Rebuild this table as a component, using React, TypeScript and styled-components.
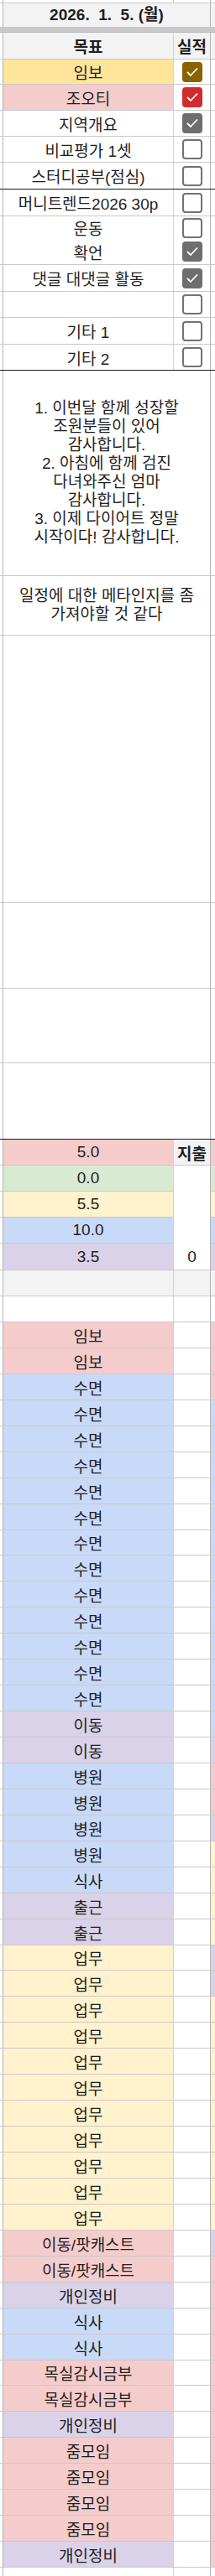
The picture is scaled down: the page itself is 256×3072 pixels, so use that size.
import React from "react";
import styled, { createGlobalStyle } from "styled-components";

const GlobalStyle = createGlobalStyle`
  body {
    margin: 0;
    background: #fff;
  }
  * {
    box-sizing: border-box;
  }
`;

const COLS = "4px 203px 44px 5px";

const C = {
	pink: "#f4cccc",
	blue: "#c9daf8",
	purple: "#d9d2e9",
	yellow: "#fff2cc",
	green: "#d9ead3",
	gold: "#ffe599",
	gray: "#f3f3f3",
	white: "#ffffff",
};

const Sheet = styled.div`
	width: 256px;
	font-family: "Liberation Sans", "Noto Sans CJK KR", sans-serif;
	font-size: 19px;
	color: #1f1f1f;
	overflow: hidden;
`;

const Row = styled.div<{ $h: number; $rule?: "black" | "none" }>`
	display: grid;
	grid-template-columns: ${COLS};
	height: ${(p) => p.$h}px;
	border-bottom: ${(p) =>
		p.$rule === "none"
			? "0"
			: `1px solid ${p.$rule === "black" ? "#1a1a1a" : "#c9c9c9"}`};
`;

const Band = styled.div`
	height: 6px;
	background: #cacaca;
	border-bottom: 1px solid #b9b9b9;
`;

const Edge = styled.div`
	background: #fff;
	border-right: 1px solid #b4b4b4;
`;

const Main = styled.div<{ $bg?: string; $bold?: boolean }>`
	background: ${(p) => p.$bg ?? C.white};
	border-right: 1px solid #d2d2d2;
	display: flex;
	align-items: center;
	justify-content: center;
	font-weight: ${(p) => (p.$bold ? 700 : 400)};
	white-space: nowrap;
`;

const Side = styled.div<{ $bg?: string; $bold?: boolean }>`
	background: ${(p) => p.$bg ?? C.white};
	border-right: 1px solid #b4b4b4;
	display: flex;
	align-items: center;
	justify-content: center;
	font-weight: ${(p) => (p.$bold ? 700 : 400)};
	white-space: nowrap;
`;

const Wide = styled.div<{ $bg?: string; $bold?: boolean }>`
	grid-column: span 2;
	background: ${(p) => p.$bg ?? C.white};
	border-right: 1px solid #b4b4b4;
	display: flex;
	align-items: center;
	justify-content: center;
	text-align: center;
	line-height: 22px;
	font-weight: ${(p) => (p.$bold ? 700 : 400)};
	white-space: pre;
`;

const Tail = styled.div<{ $bg?: string }>`
	background: ${(p) => p.$bg ?? C.white};
`;

const SpendGrid = styled.div`
	display: grid;
	grid-template-columns: ${COLS};
	grid-template-rows: repeat(5, 31px);
	border-bottom: 1px solid #c9c9c9;

	& > * {
		border-bottom: 1px solid #c9c9c9;
	}
	& > *:nth-last-child(-n + 3) {
		border-bottom: 0;
	}
`;

const MergedTotal = styled.div`
	grid-row: span 4;
	background: #fff;
	border-right: 1px solid #b4b4b4;
	border-bottom: 0 !important;
	display: flex;
	align-items: flex-end;
	justify-content: center;
	padding-bottom: 4px;
`;

const Box = styled.span<{ $fill?: string }>`
	width: 24px;
	height: 24px;
	border-radius: 4px;
	border: 2px solid ${(p) => p.$fill ?? "#727272"};
	background: ${(p) => p.$fill ?? "#fff"};
	display: flex;
	align-items: center;
	justify-content: center;
`;

const Checkbox = ({ fill }: { fill?: string }) => (
	<Box $fill={fill}>
		{fill && (
			<svg width="18" height="18" viewBox="0 0 18 18">
				<path
					d="M3.5 9.5 L7 13 L14.5 5"
					fill="none"
					stroke="#fff"
					strokeWidth="1.8"
					strokeLinecap="round"
					strokeLinejoin="round"
				/>
			</svg>
		)}
	</Box>
);

type Goal = { label: string; h: number; bg?: string; fill?: string; rule?: "black" };

const goals: Goal[] = [
	{ label: "임보", h: 30, bg: C.gold, fill: "#8a6300" },
	{ label: "조오티", h: 31, bg: C.pink, fill: "#d12b2b" },
	{ label: "지역개요", h: 31, fill: "#6e6e6e" },
	{ label: "비교평가 1셋", h: 31 },
	{ label: "스터디공부(점심)", h: 32, rule: "black" },
	{ label: "머니트렌드2026 30p", h: 32 },
	{ label: "운동", h: 27 },
	{ label: "확언", h: 31, fill: "#6e6e6e" },
	{ label: "댓글 대댓글 활동", h: 32, fill: "#6e6e6e" },
	{ label: "", h: 31 },
	{ label: "기타 1", h: 32 },
	{ label: "기타 2", h: 31, rule: "black" },
];

type Note = { text: string; h: number; rule?: "black" };

const notes: Note[] = [
	{
		text:
			"1. 이번달 함께 성장할\n조원분들이 있어\n감사합니다.\n2. 아침에 함께 검진\n다녀와주신 엄마\n감사합니다.\n3. 이제 다이어트 정말\n시작이다! 감사합니다.",
		h: 245,
	},
	{ text: "일정에 대한 메타인지를 좀\n가져야할 것 같다", h: 71 },
	{ text: "", h: 319 },
	{ text: "", h: 102 },
	{ text: "", h: 89 },
	{ text: "", h: 91, rule: "black" },
];

const spend = [
	{ value: "5.0", bg: C.pink },
	{ value: "0.0", bg: C.green },
	{ value: "5.5", bg: C.yellow },
	{ value: "10.0", bg: C.blue },
	{ value: "3.5", bg: C.purple },
];

const rep = (n: number, label: string, bg: string, tail: string) =>
	Array.from({ length: n }, () => ({ label, bg, tail }));

const schedule = [
	...rep(2, "임보", C.pink, C.pink),
	...rep(1, "수면", C.blue, C.pink),
	...rep(12, "수면", C.blue, C.blue),
	...rep(1, "이동", C.purple, C.blue),
	...rep(1, "이동", C.purple, C.purple),
	...rep(2, "병원", C.blue, C.pink),
	...rep(1, "병원", C.blue, C.purple),
	...rep(1, "병원", C.blue, C.yellow),
	...rep(1, "식사", C.blue, C.yellow),
	...rep(2, "출근", C.purple, C.yellow),
	...rep(2, "업무", C.yellow, C.purple),
	...rep(9, "업무", C.yellow, C.yellow),
	...rep(1, "이동/팟캐스트", C.pink, C.purple),
	...rep(1, "이동/팟캐스트", C.pink, C.pink),
	...rep(1, "개인정비", C.purple, C.pink),
	...rep(2, "식사", C.blue, C.pink),
	...rep(2, "목실감시금부", C.pink, C.pink),
	...rep(1, "개인정비", C.purple, C.pink),
	...rep(4, "줌모임", C.pink, C.pink),
	...rep(1, "개인정비", C.purple, C.pink),
];

const START = 1575;
const STEP = 30.9375;
const rowHeight = (i: number) =>
	Math.round(START + (i + 1) * STEP) - Math.round(START + i * STEP);

const App = () => {
	return (
		<>
			<GlobalStyle />
			<Sheet>
				<Row $h={4}>
					<Edge />
					<Main />
					<Side />
					<Tail />
				</Row>
				<Row $h={29}>
					<Edge />
					<Wide $bg={C.gray} $bold>
						{"2026.  1.  5. (월)"}
					</Wide>
					<Tail $bg={C.gray} />
				</Row>
				<Band />
				<Row $h={32}>
					<Edge />
					<Main $bg={C.gray} $bold>
						목표
					</Main>
					<Side $bg={C.gray} $bold>
						실적
					</Side>
					<Tail $bg={C.gray} />
				</Row>
				{goals.map((g, i) => (
					<Row key={i} $h={g.h} $rule={g.rule}>
						<Edge />
						<Main $bg={g.bg}>{g.label}</Main>
						<Side>
							<Checkbox fill={g.fill} />
						</Side>
						<Tail />
					</Row>
				))}
				{notes.map((n, i) => (
					<Row key={i} $h={n.h} $rule={n.rule}>
						<Edge />
						<Wide>{n.text}</Wide>
						<Tail />
					</Row>
				))}
				<SpendGrid>
					{spend.map((s, i) => (
						<React.Fragment key={i}>
							<Edge />
							<Main $bg={s.bg}>{s.value}</Main>
							{i === 0 && (
								<Side $bg={C.gray} $bold>
									지출
								</Side>
							)}
							{i === 1 && <MergedTotal>0</MergedTotal>}
							<Tail $bg={s.bg} />
						</React.Fragment>
					))}
				</SpendGrid>
				<Row $h={31}>
					<Edge />
					<Main $bg={C.gray} />
					<Side $bg={C.gray} />
					<Tail $bg={C.gray} />
				</Row>
				<Row $h={31}>
					<Edge />
					<Main />
					<Side />
					<Tail />
				</Row>
				{schedule.map((s, i) => (
					<Row key={i} $h={rowHeight(i)}>
						<Edge />
						<Main $bg={s.bg}>{s.label}</Main>
						<Side />
						<Tail $bg={s.tail} />
					</Row>
				))}
				<Row $h={12} $rule="none">
					<Edge />
					<Main />
					<Side />
					<Tail />
				</Row>
			</Sheet>
		</>
	);
};

export default App;
